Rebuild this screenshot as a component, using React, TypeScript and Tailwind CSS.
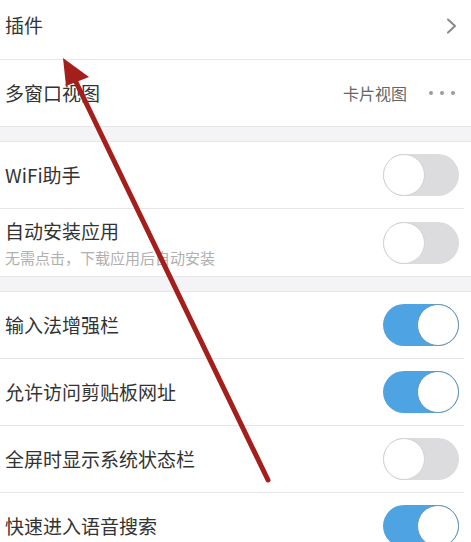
import React from 'react';

type Row = {
  title: string;
  sub?: string;
  on: boolean;
};

const section2: Row[] = [
  { title: 'WiFi助手', on: false },
  { title: '自动安装应用', sub: '无需点击，下载应用后自动安装', on: false },
];

const section3: Row[] = [
  { title: '输入法增强栏', on: true },
  { title: '允许访问剪贴板网址', on: true },
  { title: '全屏时显示系统状态栏', on: false },
  { title: '快速进入语音搜索', on: true },
];

function Toggle({ on }: { on: boolean }) {
  return (
    <div
      className={`w-[76px] h-[42px] rounded-full flex items-center shrink-0 ${
        on ? 'bg-[#4ea3e2] justify-end' : 'bg-[#dcdcdf] justify-start'
      }`}
    >
      <div
        className={`w-[42px] h-[42px] rounded-full bg-white border ${
          on ? 'border-[#6c95b3]' : 'border-[#d2d2d5]'
        }`}
      />
    </div>
  );
}

function SettingRow({ row, last }: { row: Row; last?: boolean }) {
  return (
    <div
      className={`h-[67px] flex items-center justify-between pl-[5px] ${
        last ? 'pr-[12px]' : 'border-b border-[#e6e6e8] mr-[7px] pr-[5px]'
      }`}
    >
      <div className="flex flex-col">
        <span className="text-[19px] text-[#333] leading-[26px]">{row.title}</span>
        {row.sub && <span className="text-[15px] text-[#b0b0b0] leading-[20px] mt-[4px]">{row.sub}</span>}
      </div>
      <Toggle on={row.on} />
    </div>
  );
}

export default function App() {
  return (
    <div
      className="relative w-[471px] h-[542px] overflow-hidden bg-white"
      style={{ fontFamily: '"Noto Sans CJK SC", "Noto Sans", sans-serif' }}
    >
      {/* Section 1 */}
      <div className="h-[60px] flex items-center justify-between pl-[5px] pr-[14px] border-b border-[#e6e6e8]">
        <span className="text-[19px] text-[#333] -mt-[8px]">插件</span>
        <svg width="11" height="16" viewBox="0 0 11 16" className="-mt-[8px]">
          <path d="M2 1.5 L9 8 L2 14.5" fill="none" stroke="#8a8a8a" strokeWidth="2" strokeLinecap="round" strokeLinejoin="round" />
        </svg>
      </div>
      <div className="h-[67px] flex items-center justify-between pl-[5px] pr-[16px] border-b border-[#e6e6e8]">
        <span className="text-[19px] text-[#333]">多窗口视图</span>
        <div className="flex items-center gap-[22px]">
          <span className="text-[16px] text-[#666]">卡片视图</span>
          <div className="flex gap-[7px]">
            <span className="w-[4px] h-[4px] rounded-full bg-[#9a9a9a]" />
            <span className="w-[4px] h-[4px] rounded-full bg-[#9a9a9a]" />
            <span className="w-[4px] h-[4px] rounded-full bg-[#9a9a9a]" />
          </div>
        </div>
      </div>

      <div className="h-[15px] bg-[#f4f4f6] border-b border-[#e6e6e8]" />

      {/* Section 2 */}
      <div className="border-b border-[#e6e6e8]">
        {section2.map((r, i) => (
          <SettingRow key={r.title} row={r} last={i === section2.length - 1} />
        ))}
      </div>

      <div className="h-[15px] bg-[#f4f4f6] border-b border-[#e6e6e8]" />

      {/* Section 3 */}
      <div>
        {section3.map((r) => (
          <SettingRow key={r.title} row={r} />
        ))}
      </div>

      {/* Red annotation arrow */}
      <svg className="absolute inset-0 pointer-events-none" width="471" height="542" viewBox="0 0 471 542">
        <line x1="268" y1="480" x2="74" y2="78" stroke="#a41f1c" strokeWidth="5" strokeLinecap="round" />
        <polygon points="63,58 89,77 66,86" fill="#a41f1c" />
      </svg>
    </div>
  );
}
